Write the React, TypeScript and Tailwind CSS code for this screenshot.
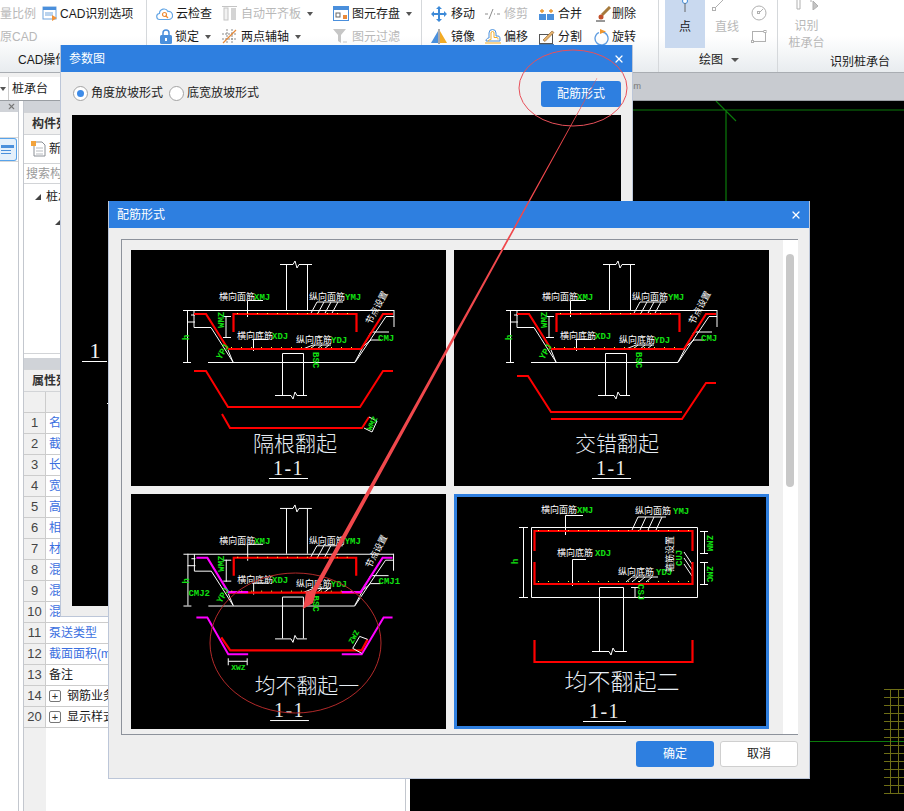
import React from 'react';
import { X } from 'lucide-react';

type Row = { no: number; name: string; link?: boolean; plus?: boolean };

const PROPS: Row[] = [
  { no: 1, name: '名称', link: true },
  { no: 2, name: '截面形状', link: true },
  { no: 3, name: '长度(mm)', link: true },
  { no: 4, name: '宽度(mm)', link: true },
  { no: 5, name: '高度(mm)', link: true },
  { no: 6, name: '相对底标高(m)', link: true },
  { no: 7, name: '材质', link: true },
  { no: 8, name: '混凝土类型', link: true },
  { no: 9, name: '混凝土强度等级', link: true },
  { no: 10, name: '混凝土外加剂', link: true },
  { no: 11, name: '泵送类型', link: true },
  { no: 12, name: '截面面积(m²)', link: true },
  { no: 13, name: '备注' },
  { no: 14, name: '钢筋业务属性', plus: true },
  { no: 20, name: '显示样式', plus: true },
];

// ribbon icons
const IconCad = () => (
  <svg width="16" height="16" viewBox="0 0 16 16">
    <rect x="1" y="1" width="13" height="12" fill="#fff" stroke="#6fa3dc" />
    <rect x="1" y="1" width="13" height="3" fill="#4a8fdc" />
    <rect x="3" y="6" width="8" height="4" fill="#b9d3ee" />
    <path d="M10 9l5 3-5 3z" fill="#f0933a" />
  </svg>
);
const IconCloud = () => (
  <svg width="17" height="14" viewBox="0 0 17 14" fill="none">
    <path d="M4 12.500a3 3 0 0 1-.5-6A4.500 4.500 0 0 1 12 4.500a3.800 3.800 0 0 1 1 8z" stroke="#62a4e4" strokeWidth="1.200" />
    <circle cx="8.500" cy="7.500" r="2" stroke="#ef8a32" strokeWidth="1.200" />
    <path d="M10 9l2 2" stroke="#ef8a32" strokeWidth="1.200" />
  </svg>
);
const IconAlign = () => (
  <svg width="16" height="16" viewBox="0 0 16 16" fill="none">
    <path d="M0 .5h15" stroke="#c4c4c4" />
    <rect x="2" y="2" width="4" height="12" fill="#f2f2f2" stroke="#c4c4c4" />
    <rect x="9" y="2" width="5" height="12" fill="#d4d4d4" />
  </svg>
);
const IconSave = () => (
  <svg width="16" height="15" viewBox="0 0 16 15">
    <rect x=".5" y=".5" width="15" height="14" fill="#fff" stroke="#4a8fdc" />
    <rect x="1" y="1" width="14" height="3" fill="#4a8fdc" />
    <rect x="3" y="7" width="4" height="4" fill="none" stroke="#666" />
    <rect x="10" y="9" width="4" height="4" fill="#e98a3a" />
  </svg>
);
const IconLock = () => (
  <svg width="12" height="15" viewBox="0 0 12 15" fill="none">
    <path d="M3 7V4a3 3 0 0 1 6 0v3" stroke="#4a8fdc" strokeWidth="1.500" />
    <rect y="6" width="12" height="9" rx="1.500" fill="#4a8fdc" />
    <rect x="5" y="9" width="2" height="3" fill="#fff" />
  </svg>
);
const IconAxis = () => (
  <svg width="15" height="15" viewBox="0 0 15 15" fill="none" stroke="#8a8a8a">
    <path d="M0 5h15M0 10h15M5 0v15M10 0v15" strokeDasharray="2 1" />
    <path d="M1 14L14 1" stroke="#e78a3a" strokeWidth="1.200" />
  </svg>
);
const IconFilter = () => (
  <svg width="15" height="15" viewBox="0 0 15 15">
    <path d="M0 0h13L8 6v8L5 12V6z" fill="#c6c6c6" />
    <path d="M10 13h4" stroke="#c6c6c6" />
  </svg>
);
const IconMove = () => (
  <svg width="16" height="16" viewBox="0 0 16 16" fill="#3d8ad8">
    <path d="M8 0l3 3H5zM8 16l-3-3h6zM0 8l3-3v6zM16 8l-3 3V5z" />
    <path d="M7 3h2v10H7zM3 7h10v2H3z" />
  </svg>
);
const IconTrim = () => (
  <svg width="15" height="12" viewBox="0 0 15 12" fill="none" stroke="#8c8c8c">
    <path d="M0 6h3M9 6h1M12 6h3M4 11l4-10" />
  </svg>
);
const IconMerge = () => (
  <svg width="15" height="12" viewBox="0 0 15 12">
    <rect y="6" width="7" height="6" fill="#4a90dc" />
    <rect x="8" y="6" width="7" height="6" fill="#4a90dc" />
    <path d="M1 3h4M3 1v4M10 3h4M12 1v4" stroke="#e9962f" strokeWidth="1.300" />
  </svg>
);
const IconBrush = () => (
  <svg width="16" height="16" viewBox="0 0 16 16" fill="none">
    <path d="M6 9l8-8" stroke="#a67a3c" strokeWidth="3" />
    <circle cx="5" cy="11" r="2.500" fill="#c2502a" />
    <path d="M0 15h9" stroke="#333" />
  </svg>
);
const IconMirror = () => (
  <svg width="16" height="15" viewBox="0 0 16 15">
    <path d="M7 2v12H0z" fill="#4a90dc" />
    <path d="M9 2v12h7z" fill="#f2ab25" />
    <path d="M8 0v15" stroke="#555" />
  </svg>
);
const IconOffset = () => (
  <svg width="16" height="15" viewBox="0 0 16 15" fill="none">
    <path d="M1 12c0-3 3-3 3-3V4a3 3 0 0 1 7 0v3h2c2 0 2 2 2 5z" stroke="#4a90dc" />
    <path d="M3 12.500c0-2 3-2 3-2V4a1.500 1.500 0 0 1 3 0v4.500h3c1 0 1 2 1 2" stroke="#f2ab25" />
    <path d="M0 14h16" stroke="#f2ab25" />
  </svg>
);
const IconSplit = () => (
  <svg width="16" height="16" viewBox="0 0 16 16" fill="none">
    <rect x=".5" y="5.500" width="13" height="9" stroke="#555" />
    <path d="M4 11l9-9 2 1.500-9 9z" fill="#e6b36c" stroke="#8a5a2c" strokeWidth=".6" />
    <path d="M0 15.500h15" stroke="#3f78b8" />
  </svg>
);
const IconRotate = () => (
  <svg width="15" height="16" viewBox="0 0 15 16" fill="none">
    <path d="M5 3.500A6.500 6.500 0 1 0 8 3" stroke="#5c9be0" strokeWidth="1.300" />
    <path d="M6 0l6 2.500L6 5z" fill="#f0962e" />
  </svg>
);

const Caret = () => <span className="ml-[6px] w-0 h-0 border-x-[3px] border-x-transparent border-t-[4px] border-t-[#555]" />;

function Tool({ icon, label, slot, muted, caret }: { icon: React.ReactNode; label: string; slot: string; muted?: boolean; caret?: boolean }) {
  return (
    <div className="flex items-center h-[23px]">
      <span className={`${slot} shrink-0 flex items-center`}>{icon}</span>
      <span className={muted ? 'text-[#b8b8b8]' : 'text-[#1a1a1a]'}>{label}</span>
      {caret && <Caret />}
    </div>
  );
}

function Ribbon() {
  return (
    <div className="h-[73px] flex bg-linear-to-b from-white via-white to-[#e8ecef] border-b border-[#a9adb2] text-[12px]">
      <div className="w-[147px] shrink-0 border-r border-[#d5d8db] flex flex-col">
        <div className="h-[48px] pt-[2px]">
          <div className="flex items-center h-[23px]">
            <span className="w-[42px] text-[#b8b8b8]">量比例</span>
            <span className="w-[18px] flex"><IconCad /></span>
            <span className="text-[#1a1a1a]">CAD识别选项</span>
          </div>
          <div className="h-[23px] flex items-center text-[#b8b8b8]">原CAD</div>
        </div>
        <div className="pl-[18px] h-[24px] flex items-center text-[#1a1a1a]">CAD操作</div>
      </div>

      <div className="w-[275px] shrink-0 border-r border-[#d5d8db] pl-[9px] pt-[2px]">
        <div className="grid grid-cols-[66px_111px_89px]">
          <Tool icon={<IconCloud />} label="云检查" slot="w-[20px]" />
          <Tool icon={<IconAlign />} label="自动平齐板" slot="w-[19px]" muted caret />
          <Tool icon={<IconSave />} label="图元存盘" slot="w-[19px]" caret />
          <div className="pl-[4px]"><Tool icon={<IconLock />} label="锁定" slot="w-[15px]" caret /></div>
          <Tool icon={<IconAxis />} label="两点辅轴" slot="w-[19px]" caret />
          <Tool icon={<IconFilter />} label="图元过滤" slot="w-[19px]" muted />
        </div>
      </div>

      <div className="w-[237px] shrink-0 border-r border-[#d5d8db] pl-[9px] pt-[2px]">
        <div className="grid grid-cols-[54px_54px_55px_64px]">
          <Tool icon={<IconMove />} label="移动" slot="w-[20px]" />
          <Tool icon={<IconTrim />} label="修剪" slot="w-[19px]" muted />
          <Tool icon={<IconMerge />} label="合并" slot="w-[19px]" />
          <div className="pl-[2px]"><Tool icon={<IconBrush />} label="删除" slot="w-[16px]" /></div>
          <Tool icon={<IconMirror />} label="镜像" slot="w-[20px]" />
          <Tool icon={<IconOffset />} label="偏移" slot="w-[19px]" />
          <Tool icon={<IconSplit />} label="分割" slot="w-[19px]" />
          <Tool icon={<IconRotate />} label="旋转" slot="w-[18px]" />
        </div>
      </div>

      <div className="w-[119px] shrink-0 border-r border-[#d5d8db] flex flex-col">
        <div className="h-[48px] flex pl-[6px]">
          <div className="w-[40px] bg-[#c9d9ef] flex flex-col items-center">
            <svg width="8" height="14" viewBox="0 0 8 14" className="mb-[4px]">
              <circle cx="4" cy="1" r="2.500" fill="#fff" stroke="#3d8ad8" />
              <path d="M4 3v9" stroke="#666" />
            </svg>
            <span className="text-[#1a1a1a]">点</span>
          </div>
          <div className="w-[46px] pl-[7px] flex flex-col">
            <svg width="18" height="13" viewBox="0 0 18 13" fill="none" stroke="#b0b0b0" className="mb-[5px]">
              <rect x=".5" y="7.500" width="3" height="3" />
              <path d="M3.500 7.500L11 0" />
            </svg>
            <span className="pl-[3px] text-[#b8b8b8] whitespace-nowrap">直线</span>
          </div>
          <div className="flex flex-col gap-[9px] pt-[5px]">
            <svg width="16" height="16" viewBox="0 0 16 16" fill="none" stroke="#b0b0b0">
              <circle cx="8" cy="8" r="7" />
              <rect x="6.500" y="6.500" width="2" height="2" />
              <path d="M9 7l3-3" />
            </svg>
            <svg width="16" height="13" viewBox="0 0 16 13" fill="none" stroke="#b0b0b0">
              <rect x="1.500" y="1.500" width="13" height="10" />
              <rect x="13" y=".5" width="2" height="2" fill="#fff" />
              <rect x=".5" y="10.500" width="2" height="2" fill="#fff" />
            </svg>
          </div>
        </div>
        <div className="h-[24px] pl-[40px] flex items-center text-[#1a1a1a]">
          绘图
          <span className="ml-[8px] w-0 h-0 border-x-[4px] border-x-transparent border-t-[4px] border-t-[#555]" />
        </div>
      </div>

      <div className="flex-1 flex flex-col">
        <div className="h-[48px] pl-[10px] w-[47px] flex flex-col items-center text-[#b8b8b8] leading-[17px]">
          <svg width="24" height="10" viewBox="0 0 24 10" fill="none" stroke="#b0b0b0" className="mb-[8px] shrink-0">
            <path d="M2 0v9h3V0" />
            <path d="M16 0v2M18 1l5 5-5 4z" fill="#c4c4c4" />
          </svg>
          <span className="whitespace-nowrap">识别</span>
          <span className="whitespace-nowrap">桩承台</span>
        </div>
        <div className="h-[24px] pl-[52px] pt-[3px] flex items-center text-[#1a1a1a]">识别桩承台</div>
      </div>
    </div>
  );
}

function PanelHead({ title }: { title: string }) {
  return (
    <>
      <div className="h-[11px] bg-[#d0d3d8]" />
      <div className="h-[23px] bg-[#f0f0f0] border-y border-[#d2d4d7] pl-[8px] flex items-center font-bold text-[#333]">{title}</div>
    </>
  );
}

function LeftPanels() {
  return (
    <div className="w-[410px] shrink-0 flex bg-white text-[12px]">
      <div className="w-[19px] border-r border-[#c3c7ce]">
        <div className="h-[11px] bg-[#d0d3d8] flex justify-end pr-[2px] items-center">
          <X size={9} strokeWidth={3} color="#777" />
        </div>
        <div className="h-[26px] border-b border-[#d8d8d8]" />
        <div className="mt-0 h-[23px] w-[17px] border border-l-0 border-[#58a3ea] rounded-r-[3px] bg-[#e4f0fb] flex flex-col justify-center gap-[2px] pl-[1px]">
          <div className="h-[3px] w-[13px] bg-[#4a90dc]" />
          <div className="h-[1px] w-[10px] bg-[#4a90dc]" />
          <div className="h-[1px] w-[10px] bg-[#4a90dc]" />
        </div>
        <div className="border-b border-[#d8d8d8] h-[1px]" />
      </div>

      <div className="w-[4px]" />

      <div className="w-[383px] border-x border-[#c3c7ce] flex flex-col">
        <div className="h-[251px] flex flex-col">
          <PanelHead title="构件列表" />
          <div className="h-[29px] border-b border-[#d2d4d7] flex items-center pl-[7px] gap-[3px]">
            <svg width="15" height="16" viewBox="0 0 15 16" fill="none">
              <path d="M3 1h8l3 3v11H3z" fill="#fff" stroke="#8a8f96" />
              <path d="M5 7h7M5 10h7M5 13h7" stroke="#b7bbc0" />
              <rect width="5" height="5" fill="#f2a33c" />
            </svg>
            <span className="text-[#1a1a1a]">新建</span>
          </div>
          <div className="h-[20px] border-b border-[#d2d4d7] pl-[2px] flex items-center text-[#9a9a9a]">搜索构件...</div>
          <div className="flex-1 pt-[4px]">
            <div className="h-[18px] flex items-center pl-[11px] gap-[5px] text-[#1a1a1a]">
              <span className="w-0 h-0 border-l-[6px] border-l-transparent border-b-[6px] border-b-[#444]" />
              <span>桩承台</span>
            </div>
            <div className="h-[18px] flex items-center pl-[31px] mt-[7px]">
              <span className="w-0 h-0 border-l-[6px] border-l-transparent border-b-[6px] border-b-[#444]" />
            </div>
          </div>
        </div>

        <div className="h-[1px] bg-[#d2d4d7] mt-[1px] mb-[4px]" />

        <div className="flex-1 flex flex-col">
          <PanelHead title="属性列表" />
          <div className="h-[21px] flex border-b border-[#cccccc] bg-[#f0f0f0]">
            <div className="w-[22px] border-r border-[#cccccc]" />
          </div>
          {PROPS.map((p) => (
            <div key={p.no} className="h-[21px] flex border-b border-[#cccccc]">
              <div className="w-[22px] shrink-0 bg-[#f0f0f0] border-r border-[#cccccc] flex items-center justify-center text-[13px] text-[#444]">{p.no}</div>
              <div className="flex-1 pl-[3px] flex items-center whitespace-nowrap">
                {p.plus && (
                  <span className="w-[12px] h-[12px] mr-[6px] border border-[#777] rounded-[2px] flex items-center justify-center text-[11px] leading-none text-[#333]">+</span>
                )}
                <span className={p.link ? 'text-[#3b6fe0]' : 'text-[#1a1a1a]'}>{p.name}</span>
              </div>
            </div>
          ))}
          <div className="flex-1 flex">
            <div className="w-[22px] bg-[#f0f0f0]" />
          </div>
        </div>
      </div>
    </div>
  );
}

function CadCanvas() {
  return (
    <div className="flex-1 bg-black relative">
      <svg viewBox="0 0 494 710" className="w-full h-full block" fill="none">
        <path d="M222 9H494M316 9V100M306 0L326 20" stroke="#0b7a0b" strokeWidth="1.200" />
        <path d="M400 640.500H494" stroke="#0b7a0b" />
        <g stroke="#6e6e16">
          <path d="M474 588.500H494M474 596.500H494M474 604.500H494M474 612.500H494M474 620.500H494M474 628.500H494M474 636.500H494M474 644.500H494M474 652.500H494M474 660.500H494M474 668.500H494M474 676.500H494M474 684.500H494M474 692.500H494" />
          <path d="M480.500 588V693M488.500 588V693" />
        </g>
      </svg>
    </div>
  );
}

const cn = "font-['Liberation_Sans','Noto_Sans_CJK_SC',sans-serif]";
const mono = "font-['Liberation_Mono',monospace]";

const Cn = ({ x, y, t }: { x: number; y: number; t: string }) => (
  <text x={x} y={y} fontSize="9" fill="#fff" className={cn}>{t}</text>
);
const Gr = ({ x, y, t, r, fs = 9 }: { x: number; y: number; t: string; r?: number; fs?: number }) => (
  <text x={x} y={y} fontSize={fs} fontWeight="700" fill="#12e012" className={mono} transform={r !== undefined ? `rotate(${r} ${x} ${y})` : undefined}>{t}</text>
);
const Red = ({ d, w = 2.2, c = '#ff0000' }: { d: string; w?: number; c?: string }) => (
  <path d={d} fill="none" stroke={c} strokeWidth={w} />
);
const Wh = ({ d }: { d: string }) => <path d={d} fill="none" stroke="#fff" strokeWidth="1" />;

const Dots = ({ from, to, y }: { from: number; to: number; y: number }) => {
  const xs: number[] = [];
  for (let x = from; x <= to; x += 10) xs.push(x);
  return <>{xs.map((x) => <rect key={x} x={x} y={y} width="1" height="1" fill="#ffff33" />)}</>;
};

function Title({ name, cx, y, ly, lx1, lx2, fs = 21 }: { name: string; cx: number; y: number; ly: number; lx1: number; lx2: number; fs?: number }) {
  return (
    <>
      <text x={cx} y={y} fontSize={fs} fill="#e6edf4" textAnchor="middle" fontWeight="300" className="font-['Noto_Sans_CJK_SC',sans-serif]">{name}</text>
      <text x={(lx1 + lx2) / 2} y={ly - 3} fontSize="20" letterSpacing="1.500" fill="#ececec" textAnchor="middle" className="font-['Liberation_Serif',serif]">1-1</text>
      <path d={`M${lx1} ${ly + 0.5}H${lx2}`} stroke="#fff" />
    </>
  );
}

// the sloped pile cap section shared by the first three pictures
function SlopedSection({ magenta }: { magenta?: boolean }) {
  return (
    <>
      <Wh d="M149 14.500H162L164 11L166 18L168 14.500H181M155.500 14.500V60M176.500 14.500V60" />
      <Wh d="M52 60.500H263M63 60.500V77.500H80L102 112M77 112.500H224L255 66.500H263M263 60V77" />
      <Wh d="M151.500 145V103.500H172.500V145M144 145.500H160L162 149L164 142L166 145.500H176" />
      <Wh d="M56.500 60V112M52 112.500H60M60 65H64M56 72H64" />
      <Wh d="M95 66V88M92 66.500H100M92 87.500H100" />
      <Wh d="M116.500 67V50.500H132M122.500 101V89.500H137M102 112L97 100" />
      <Wh d="M179 65L186 52H212M186 65L193 52M193 65L200 52M200 65L207 52M172 99L182 95H200M179 99L184 95M186 99L191 95M193 99L198 95" />
      <Wh d="M224 112L240 82H258M228 100L240 90H250" />
      <Red d="M102.500 82V64H225.500V82" />
      <Red d="M97 99H230" />
      {magenta ? (
        <>
          <Red d="M65 64H76L97 98.500H117" c="#ff00ff" />
          <Red d="M211 98.500H230L252 64H262" c="#ff00ff" />
        </>
      ) : (
        <Red d="M63 64H75L97 99M230 99L252 64H262" />
      )}
      <Dots from={106} to={224} y={63} />
      <Dots from={100} to={228} y={97} />
      <Cn x={88} y={50} t="横向面筋" />
      <Gr x={123} y={50} t="XMJ" />
      <Cn x={178} y={50} t="纵向面筋" />
      <Gr x={214} y={50} t="YMJ" />
      <Cn x={106} y={89} t="横向底筋" />
      <Gr x={141} y={89} t="XDJ" />
      <Cn x={165} y={93} t="纵向底筋" />
      <Gr x={200} y={93} t="YDJ" />
      <Gr x={93} y={78} t="WMZ" r={-90} />
      <Gr x={58} y={90} t="h" r={-90} />
      <Gr x={90} y={110} t="YPJ" r={-60} />
      <Gr x={182} y={102} t="BSC" r={90} />
      <text x={240} y={75} fontSize="9" fill="#fff" transform="rotate(-62 240 75)" className={cn}>节点设置</text>
    </>
  );
}

function Cell({ selected, children }: { selected?: boolean; children: React.ReactNode }) {
  return (
    <div className={`bg-black ${selected ? 'border-[3px] border-[#2f7fdf]' : ''}`}>
      <svg viewBox={selected ? '3 3 309 229' : '0 0 315 236'} className="w-full h-full block">{children}</svg>
    </div>
  );
}

function Picker() {
  return (
    <div className="flex-1 bg-[#efefef] pt-[10px] pl-[9px] pr-[14px] grid grid-cols-[315px_315px] grid-rows-[236px_235px] gap-x-[8px] gap-y-[8px]">
      <Cell>
        <SlopedSection />
        <Gr x={247} y={91} t="CMJ" />
        <Red d="M63 121H75L97 157H229L252 121H262" w={2} />
        <Red d="M91 164L99 178H231L238 167" w={2} />
        <Wh d="M238 167L246 171L241 182L233 178" />
        <Gr x={240} y={181} t="WMZ" r={-62} fs={8} />
        <Title name="隔根翻起" cx={164} y={201} ly={228} lx1={138} lx2={177} />
      </Cell>
      <Cell>
        <SlopedSection />
        <Gr x={247} y={91} t="CMJ" />
        <Red d="M63 126H74L97 162H228" w={2} />
        <Red d="M97 169H228L252 133H262" w={2} />
        <Title name="交错翻起" cx={163} y={201} ly={228} lx1={138} lx2={177} />
      </Cell>
      <Cell>
        <SlopedSection magenta />
        <Gr x={248} y={90} t="CMJ1" />
        <Gr x={57} y={102} t="CMJ2" />
        <Red d="M65 124H76L97 161H117" c="#ff00ff" w={2} />
        <Red d="M211 161H231L253 124H262" c="#ff00ff" w={2} />
        <Red d="M90 144L99 157H231L237 146" />
        <Wh d="M237 146L229 143L222 155L231 160M97 165V172M116 165V172M97 168H116" />
        <Gr x={222} y={151} t="ZWZ" r={-62} fs={8} />
        <Gr x={100} y={177} t="XWZ" fs={8} />
        <Title name="均不翻起一" cx={176} y={200} ly={227} lx1={139} lx2={178} />
      </Cell>
      <Cell selected>
        <Wh d="M77.500 33.500H243.500V103.500H77.500Z" />
        <Wh d="M145.500 157V93.500H169.500V157M138 157.500H155L157 161L159 154L161 157.500H173" />
        <Wh d="M69.500 33V103M65 33.500H74M65 103.500H74" />
        <Wh d="M111.500 41V21.500H129M118.500 92V65.500H132" />
        <Wh d="M178 36L184 23H212M186 36L192 23M194 36L200 23M202 36L208 23M172 88L178 83H204M178 88L184 83M185 88L191 83M192 88L198 83" />
        <Wh d="M250.500 37V59M246 37.500H254M246 59.500H254M250.500 68V91M246 68.500H254M246 90.500H254M181 93V104M177 93.500H185" />
        <Wh d="M230 58L238 70M230 64L238 76M230 70L238 82" />
        <Red d="M80.500 57V37H238.500V57" />
        <Red d="M80.500 68V90H238.500V68" />
        <Red d="M80.500 146V168H238.500V146" />
        <Dots from={84} to={236} y={36} />
        <Dots from={84} to={236} y={87} />
        <Cn x={87} y={19} t="横向面筋" />
        <Gr x={123} y={19} t="XMJ" />
        <Cn x={181} y={20} t="纵向面筋" />
        <Gr x={219} y={20} t="YMJ" />
        <Cn x={103} y={62} t="横向底筋" />
        <Gr x={141} y={62} t="XDJ" />
        <Cn x={164} y={81} t="纵向底筋" />
        <Gr x={202} y={81} t="YDJ" />
        <Gr x={64} y={70} t="h" r={-90} />
        <Gr x={253} y={41} t="ZMM" r={90} />
        <Gr x={253} y={72} t="ZMC" r={90} />
        <Gr x={184} y={90} t="CSJ" r={90} />
        <Gr x={228} y={72} t="CUJ" r={-90} />
        <text x={219} y={78} fontSize="9" fill="#fff" transform="rotate(-90 219 78)" className={cn}>箍筋设置</text>
        <Title name="均不翻起二" cx={168} y={196} ly={227} lx1={129} lx2={172} fs={23} />
      </Cell>
    </div>
  );
}

function TitleBar({ title }: { title: string }) {
  return (
    <div className="h-[27px] shrink-0 bg-[#2e7fe0] flex items-center justify-between pl-[8px] pr-[7px] text-white">
      <span>{title}</span>
      <X size={12} strokeWidth={2.500} color="#fff" />
    </div>
  );
}

const Radio = ({ on, label }: { on?: boolean; label: string }) => (
  <label className="flex items-center gap-[3px]">
    <span className="w-[15px] h-[15px] rounded-full border border-[#a3a3a3] bg-white flex items-center justify-center">
      {on && <span className="w-[7px] h-[7px] rounded-full bg-[#3d8be8]" />}
    </span>
    <span className="text-[#222]">{label}</span>
  </label>
);

export default function App() {
  return (
    <div className={`relative w-[904px] h-[811px] overflow-hidden bg-white text-[12px] ${cn}`}>
      <div className="h-full flex flex-col">
        <Ribbon />
        <div className="h-[28px] shrink-0 flex border-b border-[#9a9ea3] bg-[#c8cbd0]">
          <div className="w-[410px] bg-[#f0f0f0] flex pt-[4px]">
            <div className="w-[9px] bg-white border-r border-[#ccc] flex items-center">
              <span className="w-0 h-0 border-x-[3px] border-x-transparent border-t-[4px] border-t-[#555]" />
            </div>
            <div className="w-[300px] bg-white pl-[3px] flex items-center text-[#1a1a1a]">桩承台</div>
          </div>
          <div className="pl-[216px] flex items-center text-[9px] text-[#777]">mm</div>
        </div>
        <div className="flex-1 flex min-h-0">
          <LeftPanels />
          <CadCanvas />
        </div>
      </div>

      <div className="absolute left-[60px] top-[45px] w-[573px] h-[572px] flex flex-col bg-[#eeeeee] border border-t-0 border-[#bcc6d8]">
        <TitleBar title="参数图" />
        <div className="h-[43px] shrink-0 px-[11px] flex items-center justify-between">
          <div className="flex items-center gap-[6px] pl-[1px] -mt-[1px]">
            <Radio on label="角度放坡形式" />
            <Radio label="底宽放坡形式" />
          </div>
          <button className="w-[80px] h-[26px] rounded-[3px] bg-[#2e7fe0] text-white text-[12px]">配筋形式</button>
        </div>
        <div className="flex-1 mx-[11px] mb-[10px] bg-black">
          <svg width="60" height="300" viewBox="0 0 60 300" className="block">
            <text x="23" y="243" fontSize="22" fill="#f4f4f4" textAnchor="middle" className="font-['Liberation_Serif',serif]">1</text>
            <path d="M10 246.500H35M35 288.500H37" stroke="#fff" />
          </svg>
        </div>
      </div>

      <div className="absolute left-[108px] top-[201px] w-[702px] h-[578px] flex flex-col bg-[#eeeeee] border border-t-0 border-[#bcc6d8]">
        <TitleBar title="配筋形式" />
        <div className="flex-1 flex flex-col pl-[12px] pr-[11px] pt-[11px]">
          <div className="h-[496px] border border-[#8d929b] flex bg-white">
            <Picker />
            <div className="w-[15px] shrink-0 pt-[14px] pl-[3px] bg-white">
              <div className="w-[8px] h-[233px] rounded-full bg-[#c8c8c8]" />
            </div>
          </div>
          <div className="mt-[6px] flex justify-end gap-[6px]">
            <button className="w-[78px] h-[26px] rounded-[3px] bg-[#2e7fe0] text-white text-[12px]">确定</button>
            <button className="w-[78px] h-[26px] rounded-[3px] bg-white border border-[#cfcfcf] text-[#222] text-[12px]">取消</button>
          </div>
        </div>
      </div>

      {/* hand drawn red marks on top of the screenshot */}
      <svg width="904" height="811" viewBox="0 0 904 811" fill="none" className="absolute inset-0 pointer-events-none">
        <ellipse cx="573" cy="88" rx="54" ry="38" stroke="#e8505a" />
        <ellipse cx="295.500" cy="643" rx="85.500" ry="70" stroke="#b22a2a" />
        <path d="M597.300 78.100L596.900 77.900L312 590L306 592L303 609L313 603L316 592Z" fill="#f0484c" />
      </svg>
    </div>
  );
}
